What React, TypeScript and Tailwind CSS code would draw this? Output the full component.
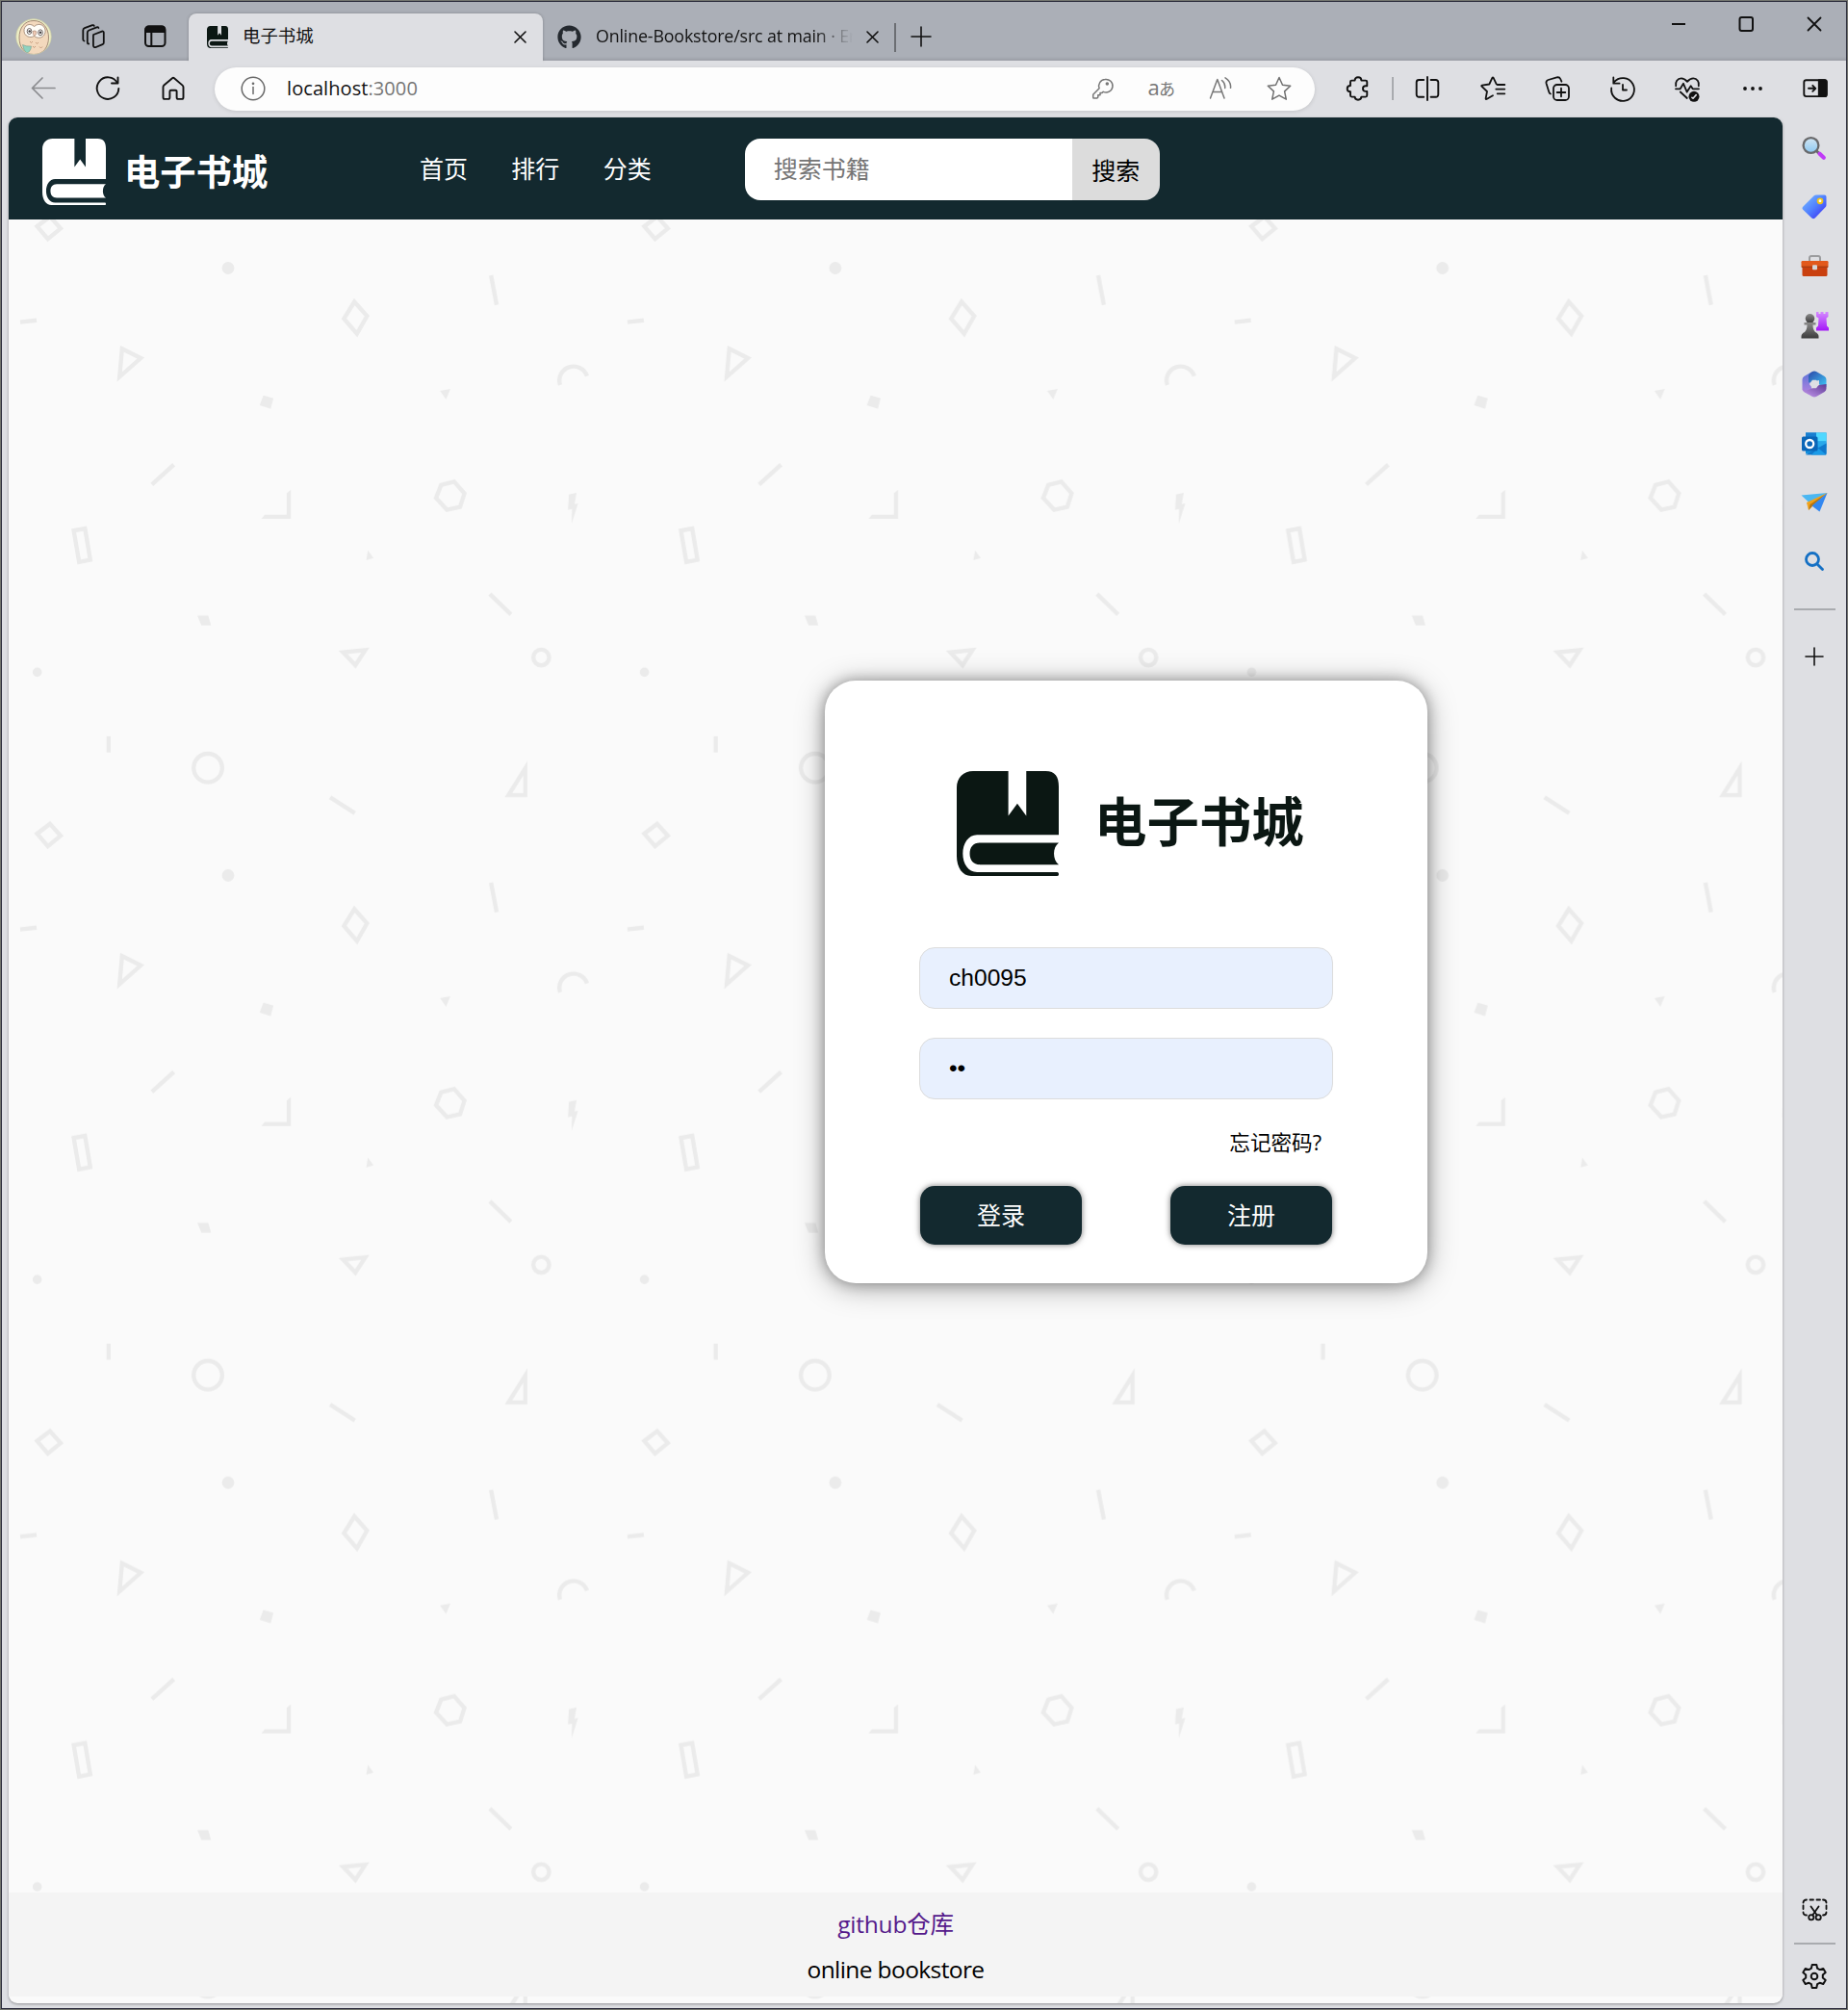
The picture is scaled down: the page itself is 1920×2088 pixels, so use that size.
import type { ReactNode } from "react";
import { FaGithub } from "react-icons/fa";

const SIZE = 630.85;

function Icon({ children, w = 26, h = 26, stroke = "#111", sw = 1.7 }: { children: ReactNode; w?: number; h?: number; stroke?: string; sw?: number }) {
  return (
    <svg width={w} height={h} viewBox={`0 0 ${w} ${h}`} fill="none" stroke={stroke} strokeWidth={sw} strokeLinecap="round" strokeLinejoin="round" className="shrink-0 overflow-visible">
      {children}
    </svg>
  );
}

function BookLogo({ className }: { className: string }) {
  return (
    <svg viewBox="0 0 105.6 108.7" preserveAspectRatio="none" fill="currentColor" className={className}>
      <path d="M53.4 0H17C7 0 0 7 0 17V88C0 100 6 108.7 15 108.7H104c1.2 0 1.6-1 1.6-2s-.5-2-1.6-2H21C12 104.7 6.3 96 6.3 85.5S12 66 21 66H105.6V16C105.6 6 102 0 92 0H72V46.3L62.7 33.7L53.4 46.3Z" />
      <path d="M105.6 74.3H24C17 74.3 13.5 79 13.5 85.6S17 97 24 97H105.6C99 92 99 79 105.6 74.3Z" />
    </svg>
  );
}

function PatternBackground() {
  return (
    <svg className="absolute inset-0 h-full w-full">
      <defs>
        <pattern id="shapes" patternUnits="userSpaceOnUse" x={3} y={132} width={SIZE} height={SIZE} viewBox={`12 254 ${SIZE} ${SIZE}`}>
          <g fill="none" stroke="#ebebeb" strokeWidth="4.4">
            <path d="M510.1 286L516 316.7M21 334.6L38 332.7M157.8 503.3L180.6 482.7M508.9 617L530.8 638.3M112.8 765V781.7M343 828.3L368.7 844.7" />
            <path d="M368.2 313.5L381.3 328.3L370.8 346.7L357.3 331Z" />
            <path d="M126.8 362.3L146.2 372L124.2 391.5Z" />
            <path d="M581.9 400A14.4 14.4 0 1 1 609.9 390.7" />
            <path d="M471.8 500.3L482.5 512.5L478 526.5L464.3 529.5L453 517.3L458.3 503.8Z" />
            <path d="M76.6 551.2L88.3 549L93.8 581.5L82.2 583.8Z" />
            <path d="M356.5 677.7L379.5 675.3L369.2 691Z" />
            <circle cx="562.3" cy="683" r="8.2" />
            <circle cx="216" cy="797.7" r="14.8" />
            <path d="M545.8 798V826H528.3Z" />
            <path d="M51.9 855.8L63 868.2L49.7 879L38.5 866Z" />
          </g>
          <g fill="#ebebeb">
            <circle cx="237" cy="278.5" r="6.4" />
            <circle cx="38.7" cy="698.3" r="4.8" />
            <path d="M302.2 508.7V539H271.5L275 534.6H297.8V512.5Z" />
            <path d="M273.6 410.7L284.1 413.7L281.2 424.7L269.8 421Z" />
            <path d="M457.1 406L468 404L463.4 415Z" />
            <path d="M591 513.7L599 512L596.9 523.7L600.6 523L593.9 544L594.3 528.7L590.1 529.7Z" />
            <path d="M382.2 571.7L388.1 579.7L380.5 582Z" />
            <path d="M205 639.3H216.3L219.3 649.7H209.2Z" />
          </g>
        </pattern>
      </defs>
      <rect width="100%" height="100%" fill="url(#shapes)" />
    </svg>
  );
}

function Avatar() {
  return (
    <svg width="38" height="38" viewBox="0 0 38 38" className="shrink-0">
      <defs>
        <clipPath id="av"><circle cx="19" cy="19" r="18" /></clipPath>
      </defs>
      <circle cx="19" cy="19" r="18.2" fill="#eeefc6" stroke="#cfd0a8" strokeWidth=".8" />
      <g clipPath="url(#av)">
        <path d="M19 2.500C9.500 2.500 4 10 4 20s5 17.500 15 17.500S34.500 30 34.500 20 28.500 2.500 19 2.500z" fill="#f3d9bd" stroke="#a38a76" strokeWidth="1" />
        <path d="M19.500 8.500C15 4 8.500 7.500 9 13.500c.4 5 6 7.500 10.500 5 4.500 3.500 10.500 1.500 11.500-4 1-6.500-6-11-11.500-6z" fill="#fffdf8" stroke="#a38a76" strokeWidth=".9" />
        <ellipse cx="14.500" cy="13.500" rx="2.300" ry="3" fill="#fff" stroke="#5c5250" strokeWidth=".9" />
        <ellipse cx="26" cy="14.800" rx="2.300" ry="3" fill="#fff" stroke="#5c5250" strokeWidth=".9" />
        <circle cx="14.700" cy="13.500" r="1.200" fill="#3f3a3a" />
        <circle cx="26" cy="14.800" r="1.200" fill="#3f3a3a" />
        <path d="M18 13.500q2-1.500 4 .5-.3 3.500-2.200 4.500Q18 17 18 13.500z" fill="#f0c9b4" stroke="#9c7f6c" strokeWidth=".6" />
        <path d="M15 24l1.500 1.500L18 24M21 25l1.500 1.500L24 25M18 29l1.500 1.500L21 29M25 29.500l1.500 1.500 1.500-1.500" fill="none" stroke="#bf9577" strokeWidth=".9" />
        <path d="M7.500 27.500q4 2 9 1.500-.5 6-5 7-3-2.500-4-8.500z" fill="#8fd3c0" stroke="#7d9a8c" strokeWidth=".6" />
      </g>
    </svg>
  );
}

function TabStrip() {
  return (
    <div className="flex h-[61px] shrink-0 bg-[#abafb7] text-[18.4px] text-[#111] shadow-[inset_0_-3px_3px_-1px_rgba(0,0,0,0.10)]">
      <div className="flex w-[194px] items-center pt-[11px] pl-[14px]">
        <Avatar />
        <div className="ml-[29px]">
          <Icon w={28} h={28} sw={1.8}>
            <path d="M12.5 8.6l8.8-3.4c1-.4 1.9.2 1.9 1.2v10.4c0 .9-.5 1.6-1.3 1.9l-6.8 2.9c-1.4.6-2.8-.3-2.8-1.7V9.900z" transform="translate(1.6 3.4)" />
            <path d="M9.200 21.500c-1 0-1.400-.7-1.400-1.600V10c0-1.200.6-2 1.600-2.500L17.500 4.300c.9-.3 1.600 0 1.900.7" />
            <path d="M4.500 18.500c-.8-.2-1.200-.8-1.200-1.600V7.600c0-1.200.6-2 1.600-2.400L13 2.200c.8-.3 1.500 0 1.800.7" />
          </Icon>
        </div>
        <div className="ml-[36px]">
          <Icon w={28} h={26} sw={2}>
            <rect x="4" y="2.500" width="20.500" height="20.500" rx="3.500" />
            <path d="M4.500 7V5.500a3 3 0 0 1 3-3h13.500a3 3 0 0 1 3 3V8H4.500z" fill="#111" />
            <path d="M10.300 8v15" />
          </Icon>
        </div>
      </div>
      <div className="relative mt-3 flex w-[368px] items-center rounded-t-[8px] bg-[#dedfe3] pr-[17px] pl-[19px] shadow-[0_0_3px_rgba(0,0,0,0.25)]">
        <BookLogo className="mt-[-1px] h-[23px] w-[22px] text-[#0b1713]" />
        <span className="mt-[-3px] ml-[15px] flex-1">电子书城</span>
        <Icon w={13} h={13} sw={1.6}><path d="M1 1l11 11M12 1L1 12" /></Icon>
        <div className="absolute bottom-[-4px] left-0 h-1 w-full bg-[#dedfe3]" />
      </div>
      <div className="flex w-[365px] items-center pt-[11px] pl-[15px]">
        <FaGithub className="size-[25px] shrink-0 text-[#24292f]" />
        <span className="mt-[-2px] ml-[15px] w-[267px] shrink-0 overflow-hidden bg-linear-to-r from-[#111] from-85% to-transparent bg-clip-text text-[17.8px] tracking-[-0.13px] whitespace-nowrap text-transparent">Online-Bookstore/src at main · Emily</span>
        <div className="ml-[14px]"><Icon w={13} h={13} sw={1.6}><path d="M1 1l11 11M12 1L1 12" /></Icon></div>
      </div>
      <div className="mt-[22px] h-[30px] w-0.5 bg-[#6c6e73]" />
      <div className="mt-[25px] ml-[15px]"><Icon w={22} h={22} sw={1.6}><path d="M11 1v20M1 11h20" /></Icon></div>
      <div className="mt-[14px] ml-auto flex gap-[54px] pr-[25px]">
        <Icon w={16} h={18} sw={2}><path d="M1 9h14" strokeLinecap="butt" /></Icon>
        <Icon w={17} h={18} sw={2}><rect x="1.5" y="2" width="13.5" height="14" rx="2" /></Icon>
        <Icon w={16} h={18} sw={1.8}><path d="M1.5 2.500l13 13M14.500 2.500l-13 13" /></Icon>
      </div>
    </div>
  );
}

function Slot({ children, className = "w-[67.5px]" }: { children: ReactNode; className?: string }) {
  return <div className={`flex shrink-0 items-center justify-center ${className}`}>{children}</div>;
}

function Toolbar() {
  return (
    <div className="flex h-[59px] shrink-0 items-center pb-px pl-[9px]">
      <Slot><Icon stroke="#8b8c8f"><path d="M25 12.500H1.500M12 2L1.500 12.500 12 23" /></Icon></Slot>
      <Slot>
        <Icon sw={1.9}>
          <path d="M22.800 7A11.300 11.300 0 1 0 24.300 13" /><path d="M23.500 1.500V7.500H17" />
        </Icon>
      </Slot>
      <Slot>
        <Icon sw={1.9}>
          <path d="M2.500 11.500c0-.7.3-1.400.9-1.900L12 2.200c.6-.5 1.400-.5 2 0l8.600 7.400c.6.5.9 1.200.9 1.900V22.300c0 .9-.7 1.600-1.600 1.600h-3.700c-.9 0-1.600-.7-1.600-1.600V16c0-.8-.6-1.300-1.300-1.300h-4.600c-.7 0-1.300.5-1.300 1.300v6.300c0 .9-.7 1.600-1.600 1.600H4.100c-.9 0-1.600-.7-1.600-1.600z" />
        </Icon>
      </Slot>
      <div className="ml-[9.5px] flex h-[45px] w-[1143px] shrink-0 items-center rounded-full bg-[#fdfdfd] pl-[27px] shadow-[0_1px_4px_rgba(0,0,0,0.12)]">
        <Icon stroke="#6a6a6a" sw={1.5}>
          <circle cx="13" cy="13" r="11.8" /><path d="M13 11.500v7" /><circle cx="13" cy="7.800" r=".6" fill="#6a6a6a" />
        </Icon>
        <span className="ml-[22px] flex-1 text-[20px] tracking-[0.08px] text-[#111]">localhost<span className="text-[#767676]">:3000</span></span>
        <div className="mr-[7px] flex">
          <Slot className="w-[61px]">
            <Icon stroke="#777" sw={1.5} w={22} h={22}>
              <path d="M13 1.500a6.800 6.800 0 1 1-1.800 12.800L10 15.500H8v2.200H5.800v2.200L4.800 21H1.500a.8.8 0 0 1-.8-.8v-3L7.100 10.700A6.800 6.800 0 0 1 13 1.500z" />
              <circle cx="15.300" cy="6" r="1" fill="#777" />
            </Icon>
          </Slot>
          <Slot className="w-[61px]"><span className="mt-[-5px] text-[22px] leading-none tracking-[-0.6px] whitespace-nowrap text-[#777]">a<span className="text-[17px]">あ</span></span></Slot>
          <Slot className="w-[61px]">
            <Icon stroke="#777" sw={1.5}>
              <path d="M2.500 23L9.800 3.500 17 23M5 16.500h9.600" /><path d="M14.500 4.500c2.500 2 3.500 5 3.200 8M18 1.800c4.200 2.500 6 6.500 5.500 10.500" />
            </Icon>
          </Slot>
          <Slot className="w-[61px]">
            <Icon stroke="#707070" sw={1.5}>
              <path d="M13 1.500l3.500 7.700 8.200 1-6.100 5.700 1.700 8.300L13 20.100l-7.300 4.100 1.700-8.300-6.100-5.700 8.200-1z" />
            </Icon>
          </Slot>
        </div>
      </div>
      <div className="ml-[31px]">
        <Icon sw={1.9}>
          <path d="M6 6.100q0-1.500 1.500-1.500H10.600c0-2 1.200-3.300 3.400-3.300s3.400 1.300 3.400 3.300h4.400q1.500 0 1.500 1.500v4.200h-1.500a2.800 2.800 0 0 0 0 5.600h1.500v4.200q0 1.500-1.500 1.500h-4.400c0 2-1.200 3.100-3.400 3.100s-3.400-1.100-3.400-3.100H7.500q-1.500 0-1.500-1.500v-3.800c-2 0-3.300-1.100-3.300-3.100s1.300-3.200 3.300-3.200z" />
        </Icon>
      </div>
      <div className="ml-[23px] h-6 w-0.5 bg-[#a9abaf]" />
      <div className="ml-[1.5px] flex">
        <Slot>
          <Icon sw={1.9}><path d="M13 1v24M9.200 4H4.200A2.500 2.500 0 0 0 1.700 6.500v12.800a2.500 2.500 0 0 0 2.500 2.500h5M16.600 4h5.200a2.500 2.500 0 0 1 2.500 2.500v12.800a2.500 2.500 0 0 1-2.500 2.500h-5.200" /></Icon>
        </Slot>
        <Slot>
          <Icon sw={1.8}><path d="M16.700 8.300L13.500 1.700q-.5-.8-1 0L9.300 8.500 1.800 9.600q-1 .3-.4 1.100L7 16 5.600 23.300q0 1 .9.700L13 20.200M17.700 9h7.600M16.300 13.600h9M17.700 18.300h7.600" /></Icon>
        </Slot>
        <Slot>
          <Icon sw={1.8}>
            <rect x="9" y="9" width="16" height="16" rx="3.800" /><path d="M17 12.700v8.600M12.700 17h8.600" />
            <path d="M6 18.500q-1.300-.4-1.700-1.900L1.500 7.500Q1 4.800 3.500 4L12.500 1.400q2.700-.6 3.700 1.600l1.200 2.700" />
          </Icon>
        </Slot>
        <Slot>
          <Icon sw={1.8}><path d="M3.300 1.500V7.700H9.600M4 6.200A11.900 11.900 0 1 1 1.200 12.500M13 9v5.500h4" /></Icon>
        </Slot>
        <Slot>
          <Icon sw={1.8}>
            <path d="M1.200 10.300C.2 6 3 2.400 6.700 2.400q3.300 0 6.300 3.400 3-3.400 6.300-3.400c3.700 0 6.500 3.600 5.500 7.900M1 13.300H5.700L9 7.800 12.700 16.600 16.700 10.200 18.700 13.300H25M5.800 16.500L12.800 23" />
            <circle cx="20" cy="21.300" r="5.500" fill="#111" stroke="none" /><path d="M17.900 22.300l1.100.9 3.200-3.600" stroke="#dedfe3" strokeWidth="1.600" />
          </Icon>
        </Slot>
        <Slot>
          <Icon><g fill="#111" stroke="none"><circle cx="5" cy="13" r="1.900" /><circle cx="13" cy="13" r="1.900" /><circle cx="21" cy="13" r="1.900" /></g></Icon>
        </Slot>
      </div>
      <div className="ml-[18px]">
        <Icon sw={1.9}>
          <rect x="1.300" y="4.300" width="23.400" height="16.800" rx="2.300" /><path d="M16.800 4.300h6a1.900 1.900 0 0 1 1.900 1.900v13a1.900 1.900 0 0 1-1.900 1.900h-6z" fill="#111" /><path d="M6 12.800h7M10.300 9.800l3 3-3 3" />
        </Icon>
      </div>
    </div>
  );
}

const sideIcons: ReactNode[] = [
  <svg width="26" height="26" viewBox="0 0 26 26" key="0">
    <defs><linearGradient id="gl" x1="0" y1="0" x2="0" y2="1"><stop stopColor="#d3e6f2" /><stop offset="1" stopColor="#8cc8f2" /></linearGradient></defs>
    <path d="M15 15.500l3.500 3.500" stroke="#6a6b6d" strokeWidth="3" /><path d="M18.600 18.800l4.200 4" stroke="#c03bf7" strokeWidth="4.200" strokeLinecap="round" />
    <circle cx="9.500" cy="10" r="7.900" fill="url(#gl)" stroke="#68696b" strokeWidth="2.300" />
  </svg>,
  <svg width="26" height="26" viewBox="0 0 26 26" key="1">
    <defs><linearGradient id="tg" x1="0" y1="0" x2="1" y2="1"><stop stopColor="#7cc0ff" /><stop offset=".5" stopColor="#5080ff" /><stop offset="1" stopColor="#3b22ee" /></linearGradient></defs>
    <path d="M12.500 1.500Q13.500.6 15 .6H23.500q2 0 2 2V11q0 1.200-1 2.200L13.700 24.500q-1.700 1.500-3.300 0L1.200 15.700q-1.400-1.500 0-3z" fill="url(#tg)" />
    <circle cx="19" cy="6.800" r="2.400" fill="#fff" stroke="#f0c419" strokeWidth="1.900" />
  </svg>,
  <svg width="29" height="24" viewBox="0 0 29 24" key="2">
    <path d="M9 7V4q0-2 2-2h7q2 0 2 2v3" fill="none" stroke="#9b9c9e" strokeWidth="2" />
    <rect x="1.500" y="12" width="26" height="11" rx="1.500" fill="#c9400f" /><rect x=".5" y="7" width="28" height="7" rx="1.200" fill="#e2591c" /><path d="M.8 13.200h27.400" stroke="#93300f" /><rect x="12" y="11.300" width="5" height="5" rx="1" fill="#d5d6d8" />
  </svg>,
  <svg width="29" height="30" viewBox="0 0 29 30" key="3">
    <defs><linearGradient id="pw" x1="0" y1="0" x2="0" y2="1"><stop stopColor="#8b8b8b" /><stop offset="1" stopColor="#3b3b3b" /></linearGradient><linearGradient id="rk" x1="0" y1="0" x2="0" y2="1"><stop stopColor="#d58bff" /><stop offset="1" stopColor="#a316f7" /></linearGradient></defs>
    <path d="M16 1h2.500v2h2V1h3v2h2V1H28.500v5l-2 1.500.5 8 2 2V20.500H16V17.500l2-2 .5-8L16 6z" fill="url(#rk)" />
    <circle cx="9.500" cy="7.800" r="4.800" fill="url(#pw)" /><path d="M3.500 12h12v2.500h-3q0 5 2.500 7.500 3.500 1.500 3.500 4.500v2H.5v-2q0-3 3.500-4.500 2.500-2.500 2.500-7.500h-3z" fill="url(#pw)" />
  </svg>,
  <svg width="26" height="28" viewBox="0 0 26 28" key="4">
    <defs><linearGradient id="ma" x1="0" y1="0" x2="0" y2="1"><stop stopColor="#5b74d8" /><stop offset="1" stopColor="#b583e0" /></linearGradient><linearGradient id="mb" x1="0" y1="0" x2="1" y2="1"><stop stopColor="#2b48a8" /><stop offset="1" stopColor="#3fc8f8" /></linearGradient><linearGradient id="mc" x1="0" y1="1" x2="1" y2="0"><stop stopColor="#c79af0" /><stop offset="1" stopColor="#5d3a94" /></linearGradient></defs>
    <path d="M10.500 1.200L2.300 6Q.5 7.200.5 9.300V18.700q0 2.100 1.800 3.300L7 24.500 10 20V7z" fill="url(#ma)" />
    <path d="M10.500 1.200q2.500-1.400 5 0L23.700 6q1.800 1.200 1.800 3.300V17L18 14.500V10L7 12.500V5.500Q7.500 3 10.500 1.200z" fill="url(#mb)" />
    <path d="M25.500 14v4.700q0 2.100-1.800 3.300l-8.200 4.800q-2.500 1.400-5 0L2.300 22Q.5 20.800.5 18.700 3 22 7 20l11-5z" fill="url(#mc)" />
    <path d="M11 9.700h4l3.200 4.300-3.200 4.300h-4L7.800 14z" fill="#dedfe3" />
  </svg>,
  <svg width="26" height="26" viewBox="0 0 26 26" key="5">
    <path d="M4 1.500h21.500v22H4z" fill="#1490df" /><path d="M4 1.500h11v9H4z" fill="#1a7fd0" /><path d="M15 1.500h10.500v9H15z" fill="#4fd8ff" /><path d="M15 10.500h10.500v6l-8 2z" fill="#28a8ea" /><path d="M4 24.500l21.500-12v11q0 1-1 1z" fill="#0f78cc" /><path d="M10 24.500l7-7 8.500 7z" fill="#1b9be8" />
    <rect x="0" y="5.500" width="16.500" height="15" rx="1.500" fill="#0a66b8" /><circle cx="8.200" cy="13" r="4" fill="none" stroke="#fff" strokeWidth="2.300" />
  </svg>,
  <svg width="28" height="22" viewBox="0 0 28 22" key="6">
    <path d="M.5 3.500L27.500 1 9 11.500z" fill="#4bb7f2" /><path d="M27.500 1L6 11l2 8 4-5z" fill="#f0a21c" /><path d="M8 19l1.500-6L27.500 1 12 15z" fill="#b87510" /><path d="M27.500 1L19.500 20.500 11.500 14.500z" fill="#3287f0" />
  </svg>,
  <svg width="22" height="22" viewBox="0 0 22 22" key="7" fill="none" stroke="#1570c4" strokeWidth="2.800" strokeLinecap="round"><circle cx="9" cy="9" r="6.500" /><path d="M14 14l5.500 5.500" /></svg>,
];

function Sidebar() {
  return (
    <aside className="flex w-[66px] flex-col items-center pt-px">
      {sideIcons.map((icon, i) => (
        <div key={i} className="flex h-[61.4px] items-center justify-center">{icon}</div>
      ))}
      <div className="mt-[18px] h-0.5 w-[43px] bg-[#a9abaf]" />
      <div className="mt-[38px]"><Icon w={20} h={20} sw={1.6}><path d="M10 1v18M1 10h18" /></Icon></div>
      <div className="mt-auto">
        <Icon w={27} h={24} sw={1.8}>
          <path d="M5 17.500C3 17.500 1.500 16.500 1.500 14.500M1.500 11V7.500M1.500 4.500C1.500 2.500 3 1.500 5 1.500M8.500 1.500h3.500M15.500 1.500h3.500M22 1.500c2 0 3.500 1 3.500 3M25.500 7.500V11M25.500 14.500c0 2-1.500 3-3.500 3" />
          <circle cx="9.800" cy="19.800" r="2.600" /><circle cx="17.200" cy="19.800" r="2.600" /><path d="M9.500 8.500l6.300 9M17.500 8.500l-6.300 9" />
        </Icon>
      </div>
      <div className="mt-[22px] h-0.5 w-[43px] bg-[#a9abaf]" />
      <div className="mt-[19px] mb-[19px]">
        <Icon w={28} h={28} sw={2}>
          <path d="M11.700 1.500h4.600l.8 3.800 2.500 1.400 3.700-1.200 2.400 4-2.900 2.600v2.900l2.900 2.600-2.400 4-3.700-1.200-2.500 1.400-.8 3.800h-4.600l-.8-3.800-2.500-1.400-3.700 1.200-2.400-4 2.900-2.600v-2.900L2.300 9.500l2.400-4 3.700 1.200 2.500-1.400z" transform="translate(0 .4)" />
          <circle cx="14" cy="14" r="3.300" />
        </Icon>
      </div>
    </aside>
  );
}

function SiteHeader() {
  return (
    <header className="relative flex h-[106px] shrink-0 items-start bg-[#13292f] text-[25px] text-white">
      <BookLogo className="mt-[22px] ml-[35px] h-[69px] w-[66px]" />
      <h1 className="mt-[30px] ml-[19px] w-[307px] text-[37.3px] leading-[54px] font-bold">电子书城</h1>
      <nav className="mt-[35px] flex gap-[45.3px] leading-[36px]">
        <a>首页</a>
        <a>排行</a>
        <a>分类</a>
      </nav>
      <div className="mt-[22px] ml-[97px] flex h-16 w-[431px] overflow-hidden rounded-[16px]">
        <div className="w-[340px] bg-white pt-[13px] pl-[30px] leading-[36px] text-[#757575]">搜索书籍</div>
        <div className="flex-1 bg-[#dcdcdc] pt-[15px] text-center leading-[36px] text-black">搜索</div>
      </div>
    </header>
  );
}

function LoginCard() {
  const field = "block h-16 w-[430px] rounded-[16px] border border-[#dcdcdc] bg-[#e8f0fe] pl-[30px] font-['Liberation_Sans',sans-serif] text-[24.6px] text-black outline-none";
  const button = "h-[61px] w-[168px] rounded-[15px] bg-[#13292f] pt-[1px] text-[25px] text-white shadow-[0_0_6px_rgba(0,0,0,0.55)]";
  return (
    <div className="mt-[479px] ml-[848px] h-[626px] w-[626px] rounded-[32px] bg-white px-[98px] pt-[94px] shadow-[0_0_14px_rgba(0,0,0,0.3),0_4px_30px_rgba(0,0,0,0.34)]">
      <div className="flex h-[109px] pl-[39px] text-[#0b1713]">
        <BookLogo className="h-[109px] w-[106px]" />
        <h2 className="mt-[12px] ml-[37px] text-[54.4px] leading-[80px] font-bold">电子书城</h2>
      </div>
      <input className={`${field} mt-[74px]`} defaultValue="ch0095" />
      <input className={`${field} mt-[30px]`} type="password" defaultValue="12" />
      <div className="mt-[29px] pr-3 text-right text-[21.6px] leading-[32px] text-black">忘记密码?</div>
      <div className="mt-[29px] flex justify-between px-px">
        <button className={button}>登录</button>
        <button className={button}>注册</button>
      </div>
    </div>
  );
}

export default function App() {
  return (
    <div className="h-[2088px] w-[1920px] overflow-hidden border border-[#73756f] font-['Open_Sans','Noto_Sans_CJK_SC',sans-serif]">
      <div className="flex h-[2086px] flex-col border border-[#2b2b3b] bg-[#dedfe3]">
        <TabStrip />
        <Toolbar />
        <div className="flex min-h-0 flex-1 pl-[7px]">
          <div className="mb-[5px] flex w-[1843px] flex-col overflow-hidden rounded-[9px] bg-[#fafafa] shadow-[0_1px_3px_rgba(0,0,0,0.35)]">
            <div className="relative flex min-h-0 flex-1 flex-col">
              <PatternBackground />
              <SiteHeader />
              <main className="relative flex-1">
                <div className="flex">
                  <LoginCard />
                </div>
              </main>
              <footer className="relative mb-[7px] h-[108px] bg-[#f4f4f4] pt-[9px] text-center text-[24.5px] leading-[47px] text-black">
                <p className="tracking-[-0.2px] text-[#551a8b]">github仓库</p>
                <p className="tracking-[-0.6px]">online bookstore</p>
              </footer>
            </div>
          </div>
          <Sidebar />
        </div>
      </div>
    </div>
  );
}
